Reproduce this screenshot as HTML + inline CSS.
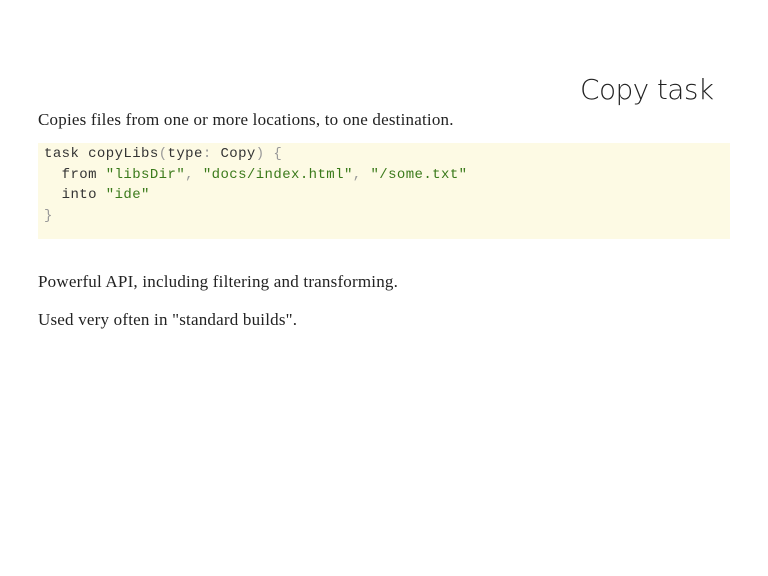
<!DOCTYPE html>
<html><head><style>
body{margin:0;width:768px;height:576px;background:#fff;position:relative;overflow:hidden;font-family:"Liberation Serif",serif;color:#222}
.t{position:absolute;left:580px;top:73px;font:300 28px "DejaVu Sans","Liberation Sans",sans-serif;color:#222;letter-spacing:-0.6px}
p{position:absolute;left:38px;margin:0;font-size:17px;letter-spacing:0.2px}
.code{position:absolute;left:38px;top:143px;width:692px;height:96px;background:#fdfae4}
pre{margin:0;position:absolute;left:6px;top:1px;font:14px/20.5px "Liberation Mono",monospace;letter-spacing:0.42px;color:#333}
.s{color:#3a7a1a}.g{color:#999}
</style></head><body>
<div class="t">Copy task</div>
<p style="top:110px">Copies files from one or more locations, to one destination.</p>
<div class="code"><pre>task copyLibs<span class="g">(</span>type<span class="g">:</span> Copy<span class="g">) {</span>
  from <span class="s">"libsDir"</span><span class="g">,</span> <span class="s">"docs/index.html"</span><span class="g">,</span> <span class="s">"/some.txt"</span>
  into <span class="s">"ide"</span>
<span class="g">}</span></pre></div>
<p style="top:272px">Powerful API, including filtering and transforming.</p>
<p style="top:310px">Used very often in "standard builds".</p>
</body></html>
